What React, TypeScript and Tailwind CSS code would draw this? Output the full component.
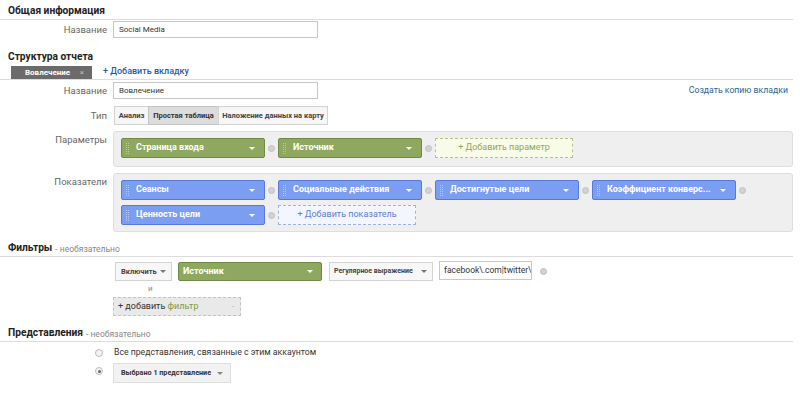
import React from "react";

const rob = { fontFamily: "Roboto, 'Liberation Sans', Arial, sans-serif" };

function Caret({ color = "#fff" }: { color?: string }) {
  return (
    <svg width="6" height="3" viewBox="0 0 6 3" className="shrink-0">
      <path d="M0 0 L6 0 L3 3 Z" fill={color} />
    </svg>
  );
}

function Handle({ color }: { color: string }) {
  return (
    <svg width="4" height="11" viewBox="0 0 4 11" className="shrink-0">
      {[0, 2, 4, 6, 8, 10].map((y) => (
        <g key={y}>
          <rect x="0" y={y} width="1" height="1" fill={color} />
          <rect x="2" y={y} width="1" height="1" fill={color} />
        </g>
      ))}
    </svg>
  );
}

function Remove() {
  return <div className="w-[7px] h-[7px] rounded-full bg-[#d2d2d2] border border-[#c0c0c0] shrink-0 mx-[3px]" />;
}

function Pill({ text, kind }: { text: string; kind: "green" | "blue" }) {
  const cls = kind === "green" ? "bg-[#8fa85f] border-[#6f8946]" : "bg-[#7b9ef2] border-[#5579de]";
  return (
    <div
      className={`w-[144px] h-[20px] rounded-[2px] border ${cls} flex items-center pl-[4px] pr-[9px] shrink-0`}
      style={rob}
    >
      <Handle color={kind === "green" ? "#b9cc92" : "#b3c7fb"} />
      <span className="ml-[6px] text-white text-[9px] font-bold flex-1 min-w-0 truncate whitespace-nowrap">{text}</span>
      <Caret />
    </div>
  );
}

function AddBox({ text, kind }: { text: string; kind: "green" | "blue" }) {
  const cls =
    kind === "green"
      ? "bg-[#f7fbe8] border-[#b4c58c] text-[#8fa85f]"
      : "bg-[#f3f6fe] border-[#9db1e8] text-[#5c7fd8]";
  return (
    <div
      className={`w-[138px] h-[20px] border border-dashed ${cls} flex items-center justify-center text-[9px] shrink-0 whitespace-nowrap`}
      style={rob}
    >
      + {text}
    </div>
  );
}

function Section({ title, optional }: { title: string; optional?: boolean }) {
  return (
    <div className="border-b border-[#dcdcdc] pl-[8px] h-[20px] flex items-end pb-[3px] leading-none" style={rob}>
      <span className="text-[10.2px] font-bold text-[#222]">{title}</span>
      {optional && <span className="text-[8.5px] text-[#888] ml-[3px]">- необязательно</span>}
    </div>
  );
}

function Label({ text, top }: { text: string; top?: boolean }) {
  return (
    <div
      className={`w-[107px] text-right text-[9.5px] text-[#666] shrink-0 leading-[14px] ${top ? "pt-[2px]" : ""}`}
      style={rob}
    >
      {text}
    </div>
  );
}

function Input({ value }: { value: string }) {
  return (
    <div
      className="w-[205px] h-[17px] border border-[#c8c8c8] bg-white flex items-center pl-[5px] text-[8px] text-[#333]"
      style={rob}
    >
      {value}
    </div>
  );
}

function Btn({ text, w, sel, first }: { text: string; w: number; sel?: boolean; first?: boolean }) {
  return (
    <div
      className={`h-[19px] border flex items-center justify-center text-[7.5px] font-bold whitespace-nowrap ${
        sel ? "bg-[#dcdcdc] border-[#c4c4c4] text-[#333]" : "bg-[#f6f6f6] border-[#d3d3d3] text-[#444]"
      } ${first ? "" : "-ml-px"}`}
      style={{ ...rob, width: w }}
    >
      {text}
    </div>
  );
}

export default function App() {
  return (
    <div className="w-[800px] h-[398px] bg-white overflow-hidden">
      <div className="w-[793px]">
        <Section title="Общая информация" />
        <div className="flex items-center mt-[1px] h-[17px]">
          <Label text="Название" />
          <div className="ml-[6px]">
            <Input value="Social Media" />
          </div>
        </div>

        <div className="mt-[12px] pl-[8px] h-[13px] flex items-center" style={rob}>
          <span className="text-[10.2px] font-bold text-[#222]">Структура отчета</span>
        </div>
        <div className="mt-[3px] h-[14px] border-b border-[#dcdcdc] flex items-end pl-[11px]" style={rob}>
          <div className="w-[81px] h-[13px] bg-[#6b6b6b] flex items-center pl-[14px] pr-[8px]">
            <span className="text-white text-[8px] font-bold flex-1 whitespace-nowrap">Вовлечение</span>
            <span className="text-[#bbb] text-[8px]">×</span>
          </div>
          <span className="ml-[11px] text-[9px] font-medium text-[#2a5b9f] mb-[1px] whitespace-nowrap">+ Добавить вкладку</span>
        </div>

        <div className="flex items-center mt-[2px] h-[17px]">
          <Label text="Название" />
          <div className="ml-[6px] flex-1 flex items-center justify-between">
            <Input value="Вовлечение" />
            <span className="text-[8.7px] text-[#2d5f8f] mr-[5px]" style={rob}>
              Создать копию вкладки
            </span>
          </div>
        </div>

        <div className="flex items-center mt-[7px] h-[19px]">
          <Label text="Тип" />
          <div className="ml-[7px] flex">
            <Btn text="Анализ" w={35} first />
            <Btn text="Простая таблица" w={71} sel />
            <Btn text="Наложение данных на карту" w={110} />
          </div>
        </div>

        <div className="flex mt-[6px]">
          <Label text="Параметры" top />
          <div className="ml-[6px] flex-1 h-[36px] bg-[#efefef] border border-[#dedede] rounded-[3px] pt-[6px] pl-[7px]">
            <div className="flex items-center">
              <Pill text="Страница входа" kind="green" />
              <Remove />
              <Pill text="Источник" kind="green" />
              <Remove />
              <AddBox text="Добавить параметр" kind="green" />
            </div>
          </div>
        </div>

        <div className="flex mt-[6px]">
          <Label text="Показатели" top />
          <div className="ml-[6px] flex-1 h-[59px] bg-[#efefef] border border-[#dedede] rounded-[3px] pt-[6px] pl-[7px] flex flex-col gap-[5px]">
            <div className="flex items-center">
              <Pill text="Сеансы" kind="blue" />
              <Remove />
              <Pill text="Социальные действия" kind="blue" />
              <Remove />
              <Pill text="Достигнутые цели" kind="blue" />
              <Remove />
              <Pill text="Коэффициент конверс..." kind="blue" />
              <Remove />
            </div>
            <div className="flex items-center">
              <Pill text="Ценность цели" kind="blue" />
              <Remove />
              <AddBox text="Добавить показатель" kind="blue" />
            </div>
          </div>
        </div>

        <div className="mt-[5px]">
          <Section title="Фильтры" optional />
        </div>
        <div className="pl-[115px] mt-[5px] flex items-center h-[19px]" style={rob}>
          <div className="w-[57px] h-[19px] border border-[#d3d3d3] bg-[#f7f7f7] flex items-center justify-between px-[5px] text-[7.5px] font-bold text-[#444] whitespace-nowrap">
            Включить
            <Caret color="#777" />
          </div>
          <div className="ml-[6px] w-[144px] h-[19px] rounded-[2px] border border-[#6f8946] bg-[#8fa85f] flex items-center pl-[4px] pr-[8px] text-white text-[9px] font-bold">
            <span className="flex-1">Источник</span>
            <Caret />
          </div>
          <div className="ml-[7px] w-[104px] h-[19px] border border-[#d3d3d3] bg-[#f7f7f7] flex items-center gap-[5px] pl-[4px] pr-[5px] text-[7px] font-bold text-[#444] whitespace-nowrap">
            <span className="flex-1">Регулярное выражение</span>
            <Caret color="#777" />
          </div>
          <div className="ml-[6px] w-[93px] h-[19px] -mt-[2px] border border-[#c8c8c8] bg-white flex items-center pl-[4px] text-[8.5px] text-[#333] overflow-hidden whitespace-nowrap">
            facebook\.com|twitter\.com
          </div>
          <div className="ml-[5px]">
            <Remove />
          </div>
        </div>
        <div className="pl-[148px] mt-[1px] h-[14px] text-[8px] text-[#888] leading-[14px]" style={rob}>
          и
        </div>
        <div className="pl-[113px] mt-[1px]">
          <div
            className="w-[128px] h-[19px] border border-dashed border-[#c4c4c4] bg-[#e9e9e9] flex items-center justify-between pl-[4px] pr-[6px] text-[9px] text-[#333] whitespace-nowrap"
            style={rob}
          >
            <span>
              + добавить <span className="text-[#7e9a4c]">фильтр</span>
            </span>
            <span className="text-[#aaa] text-[8px]">-</span>
          </div>
        </div>

        <div className="mt-[6px]">
          <Section title="Представления" optional />
        </div>
        <div className="pl-[95px] mt-[4px] flex items-center h-[13px]">
          <div className="w-[8px] h-[8px] rounded-full border border-[#bbb] bg-[#f3f3f3]" />
          <span className="ml-[11px] text-[8.7px] text-[#333] whitespace-nowrap" style={rob}>
            Все представления, связанные с этим аккаунтом
          </span>
        </div>
        <div className="pl-[95px] mt-[4px] flex items-start">
          <div className="mt-[4px] w-[8px] h-[8px] rounded-full border border-[#bbb] bg-[#f3f3f3] flex items-center justify-center">
            <div className="w-[3px] h-[3px] rounded-full bg-[#666]" />
          </div>
          <div
            className="ml-[10px] w-[118px] h-[20px] border border-[#dedede] bg-[#f2f2f2] flex items-center gap-[6px] pl-[7px] pr-[8px] text-[7.2px] font-bold text-[#333] whitespace-nowrap"
            style={rob}
          >
            <span className="flex-1">Выбрано 1 представление</span>
            <Caret color="#888" />
          </div>
        </div>
      </div>
    </div>
  );
}
